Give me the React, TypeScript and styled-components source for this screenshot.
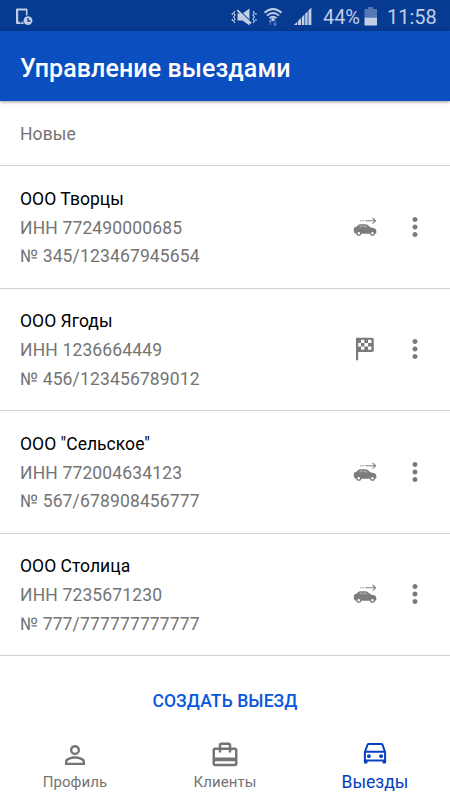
import React from 'react';
import styled, { createGlobalStyle } from 'styled-components';
import { MdPersonOutline, MdCardTravel, MdMoreVert } from 'react-icons/md';

const GlobalStyle = createGlobalStyle`
  * { box-sizing: border-box; }
  body { margin: 0; background: #fff; font-family: Roboto, "Noto Sans", sans-serif; }
  button { font: inherit; border: 0; padding: 0; background: none; color: inherit; }
`;

const Screen = styled.div`
  width: 450px;
  height: 800px;
  display: flex;
  flex-direction: column;
  overflow: hidden;
  background: #fff;
`;

const StatusBar = styled.div`
  height: 31px;
  flex: none;
  display: flex;
  align-items: center;
  justify-content: space-between;
  padding: 0 14px 0 15px;
  background: #063b91;
  color: #c1cee4;
`;

const StatusGroup = styled.div`
  display: flex;
  align-items: center;
  height: 31px;
  padding-top: 2px;
  svg { display: block; flex: none; }
`;

const StatusIcon = styled.span<{ $left: number }>`
  display: block;
  margin-left: ${p => p.$left}px;
`;

const StatusText = styled.span<{ $width: number; $left: number; $spacing: number }>`
  width: ${p => p.$width}px;
  margin-left: ${p => p.$left}px;
  font-size: 20px;
  line-height: 31px;
  padding-top: 1px;
  letter-spacing: ${p => p.$spacing}px;
  white-space: nowrap;
`;

const AppBar = styled.header`
  height: 70px;
  flex: none;
  display: flex;
  align-items: center;
  padding: 5px 20px 0;
  background: #0a4ebf;
  box-shadow: 0 1px 3px rgba(0, 0, 0, 0.4);
  z-index: 1;
`;

const Title = styled.h1`
  margin: 0;
  font-size: 25px;
  line-height: 32px;
  font-weight: 500;
  letter-spacing: 0.09px;
  color: #fff;
`;

const SectionHeader = styled.div`
  height: 65px;
  flex: none;
  padding: 1px 20px 0;
  border-bottom: 1px solid #d2d2d2;
  font-size: 17.5px;
  line-height: 64px;
  letter-spacing: 0.1px;
  color: #747474;
`;

const Row = styled.article`
  height: 122.5px;
  flex: none;
  display: flex;
  align-items: center;
  padding: 0 20px;
  border-bottom: 1px solid #d2d2d2;
`;

const Details = styled.div`
  flex: 1;
  padding-top: 2.4px;
`;

const Line = styled.div<{ $strong?: boolean }>`
  font-size: 17.5px;
  line-height: 28.75px;
  letter-spacing: ${p => (p.$strong ? 0.03 : 0.15)}px;
  color: ${p => (p.$strong ? '#000' : '#747474')};
`;

const StateIcon = styled.div`
  width: 30px;
  height: 30px;
  margin-right: 20px;
  svg { display: block; }
`;

const MenuButton = styled.button`
  width: 30px;
  height: 30px;
  color: #7a7a7a;
  svg { display: block; }
`;

const CreateButton = styled.button`
  flex: none;
  height: 48px;
  margin-top: 21px;
  font-size: 17.5px;
  line-height: 48px;
  font-weight: 500;
  letter-spacing: 0.1px;
  color: #0857dd;
`;

const BottomNav = styled.nav`
  display: grid;
  grid-template-columns: repeat(3, 150px);
  height: 75px;
  flex: none;
`;

const Tab = styled.button<{ $active?: boolean }>`
  display: flex;
  flex-direction: column;
  align-items: center;
  gap: ${p => (p.$active ? 2 : 0)}px;
  padding-top: ${p => (p.$active ? 13 : 15)}px;
  color: ${p => (p.$active ? '#0840bd' : '#747474')};
  font-size: ${p => (p.$active ? 17.5 : 15)}px;
  line-height: 24px;
  letter-spacing: ${p => (p.$active ? 0.02 : 0.1)}px;
  svg { display: block; }
`;

const PhoneClock = () => (
  <svg width="19" height="18" viewBox="0 0 19 18">
    <path d="M2 0.5h9.5q1 0 1 1v6H10.9V2.5H3.2v11.3H8.5V16H2Q1 16 1 15V1.5Q1 .5 2 .5z" fill="currentColor" />
    <circle cx="13" cy="12.6" r="4.4" fill="currentColor" />
    <path d="M13 10v3h2.4" stroke="#063b91" strokeWidth="1.3" fill="none" />
    <path d="M4.8 14.6h2" stroke="#063b91" strokeWidth="1" />
  </svg>
);

const MutedVibrate = () => (
  <svg width="26" height="20" viewBox="0 0 26 20" fill="none" stroke="currentColor">
    <path d="M6.5 6.5h5l7-5v17l-7-5h-5z" fill="currentColor" stroke="none" />
    <path d="M7.4 2.6 20 14.6" stroke="#063b91" strokeWidth="1.2" />
    <path d="M6.3 3.2 20 16.5" strokeWidth="1.8" />
    <path d="M4 4 2.6 6 4 8 2.6 10 4 12 2.6 14 4 16M1.3 6v2M1.3 12v2M22 4l1.4 2L22 8l1.4 2L22 12l1.4 2L22 16M25 6v2M25 12v2" strokeWidth="1.1" />
  </svg>
);

const Wifi = () => (
  <svg width="20" height="20" viewBox="0 0 20 20" fill="none" stroke="currentColor" strokeWidth="1.9">
    <path d="M1.5 5.8Q10-1.8 18.5 5.8M4 8.6Q10 3.4 16 8.6M6.5 11.2Q10 8.2 13.5 11.2" />
    <path d="M10 10.5 7.8 12.4 10 14.4 12.2 12.4z" fill="currentColor" stroke="none" />
    <path d="M7.4 18v-4.5M5.8 15l1.6-2 1.6 2M12 13.5V18M10.4 16.5l1.6 2 1.6-2" stroke="#577db8" strokeWidth="1.2" />
  </svg>
);

const Signal = () => (
  <svg width="18" height="20" viewBox="0 0 18 20" fill="currentColor">
    <path d="M0 18 3.2 14.8V18zM4 14 7 11V18H4zM7.8 10.2l2.6-2.6V18H7.8zM11.2 6.8l2.4-2.4V18h-2.4zM14.4 3.6 17.4.6V18h-3z" />
  </svg>
);

const Battery = () => (
  <svg width="14" height="19" viewBox="0 0 14 19">
    <path d="M4 0h5v2h4v8.5H.5V2H4z" fill="#5478b4" />
    <path d="M.5 10.5H13V18.5H.5z" fill="currentColor" />
  </svg>
);

const DepartingCar = () => (
  <svg width="30" height="30" viewBox="0 0 30 30">
    <path d="M10.2 8.8h1.2M12.3 8.8h1.5M15.2 8.8h10M22.6 6l3 2.8-3 2.8" fill="none" stroke="#808080" strokeWidth="1.1" />
    <path d="M3.8 16.7Q3.8 15.4 6 15L8.2 13.1Q9 12.3 10.2 12.3H15.5Q16.8 12.3 17.8 13.1L20.3 15.2 24.3 16.3Q26.3 16.9 26.3 19V21Q26.3 21.8 25 21.8H6Q4.8 21.8 4.8 21L3.8 20z" fill="#7c7c7c" />
    <path d="M8.8 15.3 10.2 13.5H12.3V15.3zM13.2 13.5H15.7L18 15.3H13.2z" fill="#aaa" />
    <circle cx="8.8" cy="21.2" r="1.9" fill="#fff" stroke="#7c7c7c" strokeWidth="1.3" />
    <circle cx="22.4" cy="21.2" r="1.9" fill="#fff" stroke="#7c7c7c" strokeWidth="1.3" />
  </svg>
);

const FinishFlag = () => (
  <svg width="30" height="30" viewBox="0 0 30 30">
    <path d="M6 3.8H22Q23.8 3.8 23.8 5.5V16.3Q23.8 18 22 18H8.2V26.3H6z" fill="#7a7a7a" />
    <path d="M11 5.8h3.4v3.3H11zM18 5.8h3.4v3.3H18zM8.2 9.1H11v3.4H8.2zM14.4 9.1H18v3.4h-3.6zM11 12.5h3.4v3.3H11zM18 12.5h3.4v3.3H18z" fill="#fff" />
  </svg>
);

const FrontCar = () => (
  <svg width="30" height="30" viewBox="0 0 30 30">
    <path d="M4.9 14 7.5 6.9Q7.8 6.1 8.8 6.1H21.2Q22.2 6.1 22.5 6.9L25.1 14V22.5H4.9zM4.9 13.8H25.1" fill="none" stroke="currentColor" strokeWidth="2" />
    <path d="M3.9 22H7.5V24.7Q7.5 25.5 6.6 25.5H4.8Q3.9 25.5 3.9 24.6zM22.5 22H26.1V24.6Q26.1 25.5 25.2 25.5H23.4Q22.5 25.5 22.5 24.7z" fill="currentColor" />
    <circle cx="8.9" cy="18.2" r="1.9" fill="currentColor" />
    <circle cx="21.1" cy="18.2" r="1.9" fill="currentColor" />
  </svg>
);

interface Visit {
  name: string;
  inn: string;
  number: string;
  finished?: boolean;
}

const visits: Visit[] = [
  { name: 'ООО Творцы', inn: '772490000685', number: '345/123467945654' },
  { name: 'ООО Ягоды', inn: '1236664449', number: '456/123456789012', finished: true },
  { name: 'ООО "Сельское"', inn: '772004634123', number: '567/678908456777' },
  { name: 'ООО Столица', inn: '7235671230', number: '777/777777777777' },
];

const VisitRow = ({ visit }: { visit: Visit }) => (
  <Row>
    <Details>
      <Line $strong>{visit.name}</Line>
      <Line>ИНН {visit.inn}</Line>
      <Line>№ {visit.number}</Line>
    </Details>
    <StateIcon>{visit.finished ? <FinishFlag /> : <DepartingCar />}</StateIcon>
    <MenuButton><MdMoreVert size={30} /></MenuButton>
  </Row>
);

export default function App() {
  return (
    <>
      <GlobalStyle />
      <Screen>
        <StatusBar>
          <StatusGroup><PhoneClock /></StatusGroup>
          <StatusGroup>
            <StatusIcon $left={0}><MutedVibrate /></StatusIcon>
            <StatusIcon $left={6}><Wifi /></StatusIcon>
            <StatusIcon $left={11}><Signal /></StatusIcon>
            <StatusText $width={41} $left={11} $spacing={-0.1}>44%</StatusText>
            <Battery />
            <StatusText $width={49} $left={9} $spacing={0}>11:58</StatusText>
          </StatusGroup>
        </StatusBar>
        <AppBar><Title>Управление выездами</Title></AppBar>
        <SectionHeader>Новые</SectionHeader>
        {visits.map(visit => <VisitRow key={visit.number} visit={visit} />)}
        <CreateButton>СОЗДАТЬ ВЫЕЗД</CreateButton>
        <BottomNav>
          <Tab><MdPersonOutline size={30} />Профиль</Tab>
          <Tab><MdCardTravel size={30} />Клиенты</Tab>
          <Tab $active><FrontCar />Выезды</Tab>
        </BottomNav>
      </Screen>
    </>
  );
}
